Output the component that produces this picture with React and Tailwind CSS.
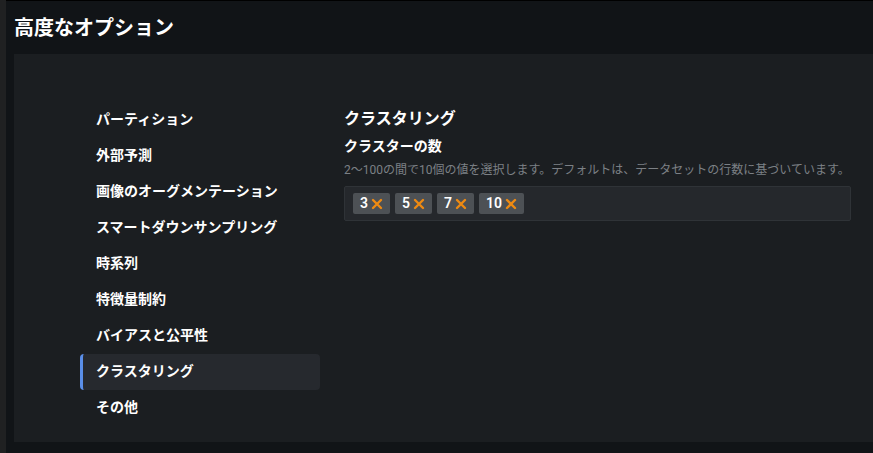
import React, { useState } from "react";

const sections = [
  "パーティション",
  "外部予測",
  "画像のオーグメンテーション",
  "スマートダウンサンプリング",
  "時系列",
  "特徴量制約",
  "バイアスと公平性",
  "クラスタリング",
  "その他",
];

function Chip({ value }) {
  return (
    <div className="flex h-[21px] items-center gap-[3px] rounded-[2px] bg-[#4d5155] px-[7px] text-[14px] font-semibold text-white">
      <span>{value}</span>
      <svg width="12" height="12" viewBox="0 0 12 12">
        <path d="M2 2 L10 10 M10 2 L2 10" stroke="#ee8a12" strokeWidth="2.4" strokeLinecap="round" />
      </svg>
    </div>
  );
}

export default function App() {
  const [active, setActive] = useState("クラスタリング");
  const [clusters] = useState([3, 5, 7, 10]);

  return (
    <div
      className="flex h-[453px] w-[873px] overflow-hidden bg-[#111417]"
      style={{ fontFamily: 'Roboto, "Noto Sans CJK JP", sans-serif' }}
    >
      <div className="w-[6px] shrink-0 bg-[#202122]" />
      <div className="flex flex-1 flex-col border-t border-black pl-[8px]">
        <div className="flex h-[53px] shrink-0 items-center">
          <h1 className="text-[20px] font-bold text-white">高度なオプション</h1>
        </div>

        <div className="flex h-[388px] bg-[#1b1e21] pl-[66px] pr-[22px] pt-[48px]">
          <nav className="flex w-[240px] shrink-0 flex-col">
            {sections.map((s) => (
              <button
                key={s}
                onClick={() => setActive(s)}
                className={
                  s === active
                    ? "flex h-[36px] items-center rounded-[4px] border-l-[3px] border-[#5a8ee8] bg-[#26292e] pb-[2px] pl-[13px] text-left text-[14px] font-bold text-white"
                    : "flex h-[36px] items-center pb-[2px] pl-[16px] text-left text-[14px] font-bold text-white"
                }
              >
                {s}
              </button>
            ))}
          </nav>

          <div className="ml-[24px] flex flex-1 flex-col">
            <h2 className="mt-[6px] text-[16px] font-bold leading-[22px] text-white">クラスタリング</h2>
            <h3 className="mt-[6px] text-[14px] font-bold leading-[20px] text-white">クラスターの数</h3>
            <p className="mt-[6px] text-[12px] leading-[16px] text-[#7c8085]">
              2〜100の間で10個の値を選択します。デフォルトは、データセットの行数に基づいています。
            </p>
            <div className="mt-[8px] flex h-[35px] items-center gap-[5px] rounded-[2px] border border-[#2f3337] bg-[#25282c] px-[8px]">
              {clusters.map((c) => (
                <Chip key={c} value={c} />
              ))}
            </div>
          </div>
        </div>
      </div>
    </div>
  );
}
